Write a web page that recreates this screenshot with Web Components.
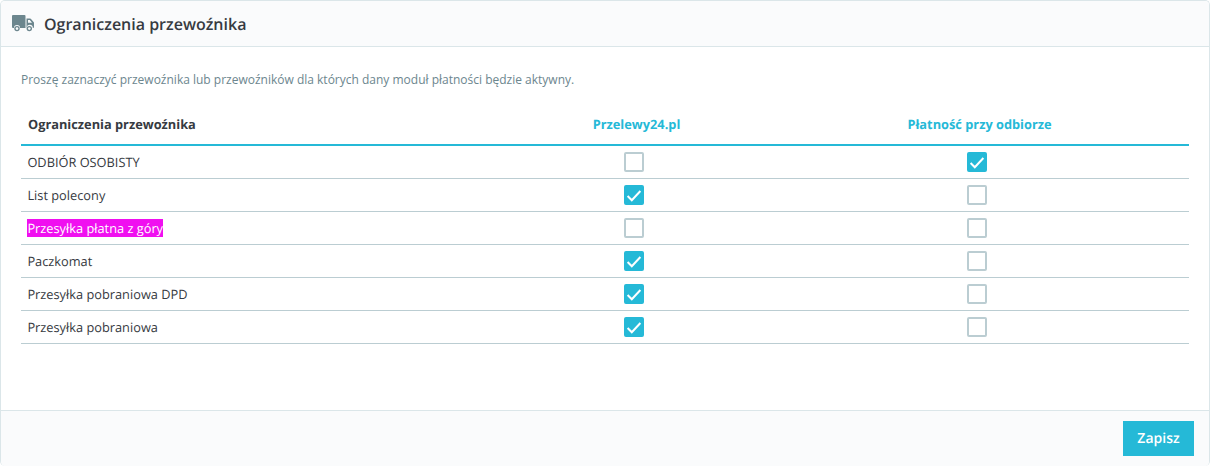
<!DOCTYPE html>
<html lang="pl">
<head>
<meta charset="utf-8">
<title>Ograniczenia przewoźnika</title>
<style>
    html, body { margin: 0; padding: 0; background: #fff; }
    body { font-family: "Open Sans", sans-serif; font-size: 12px; color: #363a41; }
</style>
</head>
<body>
<ps-panel heading="Ograniczenia przewoźnika">
    <p class="intro" slot="intro">Proszę zaznaczyć przewoźnika lub przewoźników dla których dany moduł płatności będzie aktywny.</p>
    <carrier-head first="Ograniczenia przewoźnika" second="Przelewy24.pl" third="Płatność przy odbiorze"></carrier-head>
    <carrier-row label="ODBIÓR OSOBISTY" third-checked></carrier-row>
    <carrier-row label="List polecony" second-checked></carrier-row>
    <carrier-row label="Przesyłka płatna z góry" marked></carrier-row>
    <carrier-row label="Paczkomat" second-checked></carrier-row>
    <carrier-row label="Przesyłka pobraniowa DPD" second-checked></carrier-row>
    <carrier-row label="Przesyłka pobraniowa" second-checked></carrier-row>
    <button-save slot="footer">Zapisz</button-save>
</ps-panel>

<script>
const panelTemplate = document.createElement('template');
panelTemplate.innerHTML = `
    <style>
    :host {
        display: flex;
        flex-direction: column;
        box-sizing: border-box;
        width: 1210px;
        height: 466px;
        border: 1px solid #dbe6e9;
        border-bottom: 0;
        border-radius: 5px;
        overflow: hidden;
    }

    header {
        display: flex;
        align-items: center;
        gap: 10px;
        height: 45px;
        padding: 0 11px;
        background: #fafbfc;
        border-bottom: 1px solid #dbe6e9;
        font-size: 16px;
        font-weight: 600;
        color: #363a41;
        text-rendering: geometricPrecision;
    }

    header svg {
        display: block;
        width: 22px;
        height: 18px;
        margin-top: -1px;
    }

    .body {
        flex: 1;
        padding: 24px 20px 0;
    }

    .intro-box {
        height: 31px;
        font-size: 12px;
        line-height: 18px;
        color: #6c868e;
    }

    ::slotted(p) {
        margin: 0;
    }

    footer {
        display: flex;
        justify-content: flex-end;
        align-items: flex-start;
        height: 56px;
        padding: 10px 15px 0 0;
        box-sizing: border-box;
        background: #fafbfc;
        border-top: 1px solid #dbe6e9;
    }
    </style>

    <header>
        <svg viewBox="0 0 22 18" fill="#6c868e" aria-hidden="true">
            <path d="M1 1h11.5a1 1 0 0 1 1 1v12H8a3 3 0 0 0-6 0H1a1 1 0 0 1-1-1V2a1 1 0 0 1 1-1z"/>
            <path fill-rule="evenodd" d="M14.5 4.5h3.7a1 1 0 0 1 .8.4l2.8 3.4a1 1 0 0 1 .2.6v4.1a1 1 0 0 1-1 1h-.2a3 3 0 0 0-6-.4h-.3zM16 6v2.8h4l-2.2-2.8z"/>
            <circle cx="5" cy="14.6" r="2.7"/>
            <circle cx="17.3" cy="14.6" r="2.7"/>
            <circle cx="5" cy="14.6" r="1.3" fill="#fafbfc"/>
            <circle cx="17.3" cy="14.6" r="1.3" fill="#fafbfc"/>
        </svg>
        <span class="heading"></span>
    </header>
    <div class="body">
        <div class="intro-box"><slot name="intro"></slot></div>
        <slot></slot>
    </div>
    <footer><slot name="footer"></slot></footer>
`;

class PsPanel extends HTMLElement {
    constructor() {
        super();
        this._shadowRoot = this.attachShadow({ mode: 'open' });
        this._shadowRoot.appendChild(panelTemplate.content.cloneNode(true));
        this._shadowRoot.querySelector('.heading').textContent = this.getAttribute('heading');
    }
}

const headTemplate = document.createElement('template');
headTemplate.innerHTML = `
    <style>
    :host {
        display: grid;
        grid-template-columns: 482px 262px 424px;
        align-items: center;
        height: 42px;
        border-bottom: 2px solid #25b9d7;
        font-size: 12.8px;
        font-weight: 700;
        text-rendering: geometricPrecision;
    }

    div {
        padding-top: 2px;
    }

    .first {
        padding-left: 7px;
        color: #363a41;
    }

    .second, .third {
        padding-left: 5px;
        text-align: center;
        color: #25b9d7;
    }
    </style>

    <div class="first"></div>
    <div class="second"></div>
    <div class="third"></div>
`;

class CarrierHead extends HTMLElement {
    constructor() {
        super();
        this._shadowRoot = this.attachShadow({ mode: 'open' });
        this._shadowRoot.appendChild(headTemplate.content.cloneNode(true));
        ['first', 'second', 'third'].forEach((name) => {
            this._shadowRoot.querySelector('.' + name).textContent = this.getAttribute(name);
        });
    }
}

const rowTemplate = document.createElement('template');
rowTemplate.innerHTML = `
    <style>
    :host {
        display: grid;
        grid-template-columns: 482px 262px 424px;
        align-items: center;
        height: 32px;
        border-bottom: 1px solid #bbcdd2;
        font-size: 12.8px;
        color: #363a41;
        text-rendering: geometricPrecision;
    }

    .label {
        padding-left: 6.4px;
    }

    .mark {
        background: #f00ff0;
        color: #fff;
    }

    .cell {
        display: flex;
        justify-content: center;
    }
    </style>

    <div class="label"><span></span></div>
    <div class="cell"><carrier-check class="second"></carrier-check></div>
    <div class="cell"><carrier-check class="third"></carrier-check></div>
`;

class CarrierRow extends HTMLElement {
    constructor() {
        super();
        this._shadowRoot = this.attachShadow({ mode: 'open' });
        this._shadowRoot.appendChild(rowTemplate.content.cloneNode(true));

        const label = this._shadowRoot.querySelector('span');
        label.textContent = this.getAttribute('label');
        if (this.hasAttribute('marked')) {
            label.className = 'mark';
        }
        if (this.hasAttribute('second-checked')) {
            this._shadowRoot.querySelector('.second').setAttribute('checked', '');
        }
        if (this.hasAttribute('third-checked')) {
            this._shadowRoot.querySelector('.third').setAttribute('checked', '');
        }
    }
}

const checkTemplate = document.createElement('template');
checkTemplate.innerHTML = `
    <style>
    :host {
        display: block;
        box-sizing: border-box;
        width: 20px;
        height: 20px;
        border: 2px solid #bbcdd2;
        border-radius: 2px;
        background: #fff;
    }

    :host([checked]) {
        background: #25b9d7;
        border-color: #25b9d7;
    }

    svg {
        display: none;
        width: 16px;
        height: 16px;
    }

    :host([checked]) svg {
        display: block;
    }
    </style>

    <svg viewBox="0 0 16 16" fill="none" stroke="#fff" stroke-width="2" aria-hidden="true">
        <path d="M1.6 9l4.2 4.2L14.4 4"/>
    </svg>
`;

class CarrierCheck extends HTMLElement {
    constructor() {
        super();
        this._shadowRoot = this.attachShadow({ mode: 'open' });
        this._shadowRoot.appendChild(checkTemplate.content.cloneNode(true));
    }
}

const buttonTemplate = document.createElement('template');
buttonTemplate.innerHTML = `
    <style>
    :host {
        display: block;
    }

    button {
        display: block;
        width: 71px;
        height: 35px;
        padding: 0;
        border: 0;
        background: #25b9d7;
        color: #fff;
        font-family: "Open Sans", sans-serif;
        font-size: 14px;
        font-weight: 600;
        text-rendering: geometricPrecision;
    }
    </style>

    <button type="button"><slot></slot></button>
`;

class ButtonSave extends HTMLElement {
    constructor() {
        super();
        this._shadowRoot = this.attachShadow({ mode: 'open' });
        this._shadowRoot.appendChild(buttonTemplate.content.cloneNode(true));
    }
}

window.customElements.define('carrier-check', CarrierCheck);
window.customElements.define('carrier-head', CarrierHead);
window.customElements.define('carrier-row', CarrierRow);
window.customElements.define('button-save', ButtonSave);
window.customElements.define('ps-panel', PsPanel);
</script>
</body>
</html>
